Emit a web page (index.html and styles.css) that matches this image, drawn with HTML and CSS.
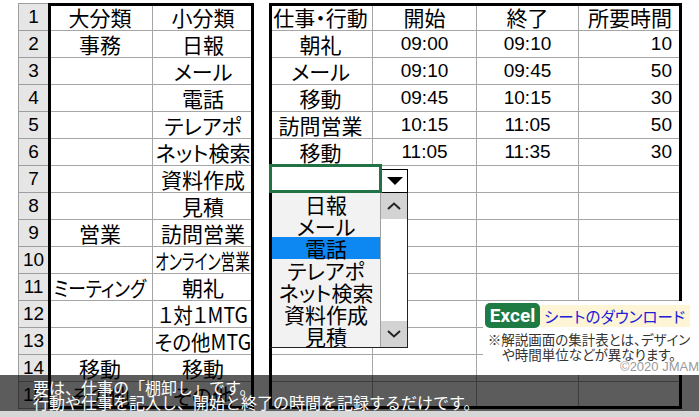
FILE: index.html
```html
<!DOCTYPE html>
<html lang="ja">
<head>
<meta charset="utf-8">
<title>仕事の棚卸し</title>
<link rel="stylesheet" href="styles.css">
</head>
<body>
<div class="sheet">
  <div class="rowhead">
    <div class="rh">1</div><div class="rh">2</div><div class="rh">3</div><div class="rh">4</div><div class="rh">5</div>
    <div class="rh">6</div><div class="rh">7</div><div class="rh">8</div><div class="rh">9</div><div class="rh">10</div>
    <div class="rh">11</div><div class="rh">12</div><div class="rh">13</div><div class="rh">14</div><div class="rh">15</div>
  </div>

  <div class="tbl tbl-left">
    <div class="c">大分類</div><div class="c">小分類</div>
    <div class="c">事務</div><div class="c">日報</div>
    <div class="c"></div><div class="c">メール</div>
    <div class="c"></div><div class="c">電話</div>
    <div class="c"></div><div class="c">テレアポ</div>
    <div class="c"></div><div class="c">ネット検索</div>
    <div class="c"></div><div class="c">資料作成</div>
    <div class="c"></div><div class="c">見積</div>
    <div class="c">営業</div><div class="c">訪問営業</div>
    <div class="c"></div><div class="c"><span class="squeeze">オンライン営業</span></div>
    <div class="c"><span class="narrow">ミーティング</span></div><div class="c">朝礼</div>
    <div class="c"></div><div class="c"><span class="tight">１対１MTG</span></div>
    <div class="c"></div><div class="c"><span class="tight">その他MTG</span></div>
    <div class="c">移動</div><div class="c">移動</div>
    <div class="c">その他</div><div class="c">その他</div>
  </div>

  <div class="tbl tbl-right">
    <div class="c">仕事・行動</div><div class="c">開始</div><div class="c">終了</div><div class="c">所要時間</div>
    <div class="c">朝礼</div><div class="c n">09:00</div><div class="c n">09:10</div><div class="c n r">10</div>
    <div class="c">メール</div><div class="c n">09:10</div><div class="c n">09:45</div><div class="c n r">50</div>
    <div class="c">移動</div><div class="c n">09:45</div><div class="c n">10:15</div><div class="c n r">30</div>
    <div class="c">訪問営業</div><div class="c n">10:15</div><div class="c n">11:05</div><div class="c n r">50</div>
    <div class="c">移動</div><div class="c n">11:05</div><div class="c n">11:35</div><div class="c n r">30</div>
    <div class="c"></div><div class="c"></div><div class="c"></div><div class="c"></div>
    <div class="c"></div><div class="c"></div><div class="c"></div><div class="c"></div>
    <div class="c"></div><div class="c"></div><div class="c"></div><div class="c"></div>
    <div class="c"></div><div class="c"></div><div class="c"></div><div class="c"></div>
    <div class="c"></div><div class="c"></div><div class="c"></div><div class="c"></div>
    <div class="c"></div><div class="c"></div><div class="c"></div><div class="c"></div>
    <div class="c"></div><div class="c"></div><div class="c"></div><div class="c"></div>
    <div class="c"></div><div class="c"></div><div class="c"></div><div class="c"></div>
    <div class="c"></div><div class="c"></div><div class="c"></div><div class="c"></div>
  </div>
</div>

<div class="active-cell"></div>
<div class="dd-btn">
  <svg width="16" height="8" viewBox="0 0 16 8"><polygon points="0,0 16,0 8,8" fill="#000"/></svg>
</div>
<div class="dd-list">
  <div class="dd-items">
    <div class="dd-item">日報</div>
    <div class="dd-item">メール</div>
    <div class="dd-item dd-sel">電話</div>
    <div class="dd-item">テレアポ</div>
    <div class="dd-item">ネット検索</div>
    <div class="dd-item">資料作成</div>
    <div class="dd-item">見積</div>
  </div>
  <div class="dd-scroll">
    <div class="sb-btn">
      <svg width="14" height="8" viewBox="0 0 14 8"><polyline points="1,7 7,1.5 13,7" fill="none" stroke="#222" stroke-width="2"/></svg>
    </div>
    <div class="sb-track"></div>
    <div class="sb-btn">
      <svg width="14" height="8" viewBox="0 0 14 8"><polyline points="1,1 7,6.5 13,1" fill="none" stroke="#222" stroke-width="2"/></svg>
    </div>
  </div>
</div>

<div class="notice">
  <div class="dl-row">
    <span class="excel">Excel</span>
    <span class="dl-link">シートのダウンロード</span>
  </div>
  <p class="note">※解説画面の集計表とは、デザイン<br>や時間単位などが異なります。</p>
  <div class="copy">©2020 JMAM</div>
</div>

<div class="caption">
  <p>要は、仕事の「棚卸し」です。</p>
  <p>行動や仕事を記入し、開始と終了の時間を記録するだけです。</p>
</div>
</body>
</html>
```

FILE: styles.css
```css
* { box-sizing: border-box; }
html, body { margin: 0; padding: 0; }
body {
  width: 699px;
  height: 417px;
  background: #d7d7d7;
  font-family: "Noto Sans CJK JP", sans-serif;
  color: #000;
  position: relative;
  overflow: hidden;
}

.sheet {
  display: flex;
  align-items: flex-start;
  height: 411px;
  background: #fff;
  padding: 3px 0 0 18px;
}

.rowhead {
  width: 30px;
  border-top: 1px solid #9e9e9e;
  border-left: 1px solid #9e9e9e;
}
.rh {
  height: 27px;
  border-bottom: 1px solid #9e9e9e;
  background: #e6e6e6;
  font: 19px/26px "Liberation Sans", sans-serif;
  text-align: center;
}

.tbl {
  display: grid;
  grid-auto-rows: 27px;
  border-top: 1px solid #a6a6a6;
  outline: 3px solid #000;
  outline-offset: -3px;
}
.tbl-left {
  width: 206px;
  grid-template-columns: 105px 101px;
}
.tbl-right {
  width: 413px;
  margin-left: 15px;
  grid-template-columns: 104px 104px 102px 103px;
}

.c {
  display: flex;
  align-items: center;
  justify-content: center;
  border-bottom: 1px solid #a6a6a6;
  border-right: 1px solid #a6a6a6;
  font-size: 21px;
  line-height: 26px;
  white-space: nowrap;
  font-feature-settings: "palt";
}
.c.n {
  font-family: "Liberation Sans", sans-serif;
  font-size: 19px;
}
.c.r {
  justify-content: flex-end;
  padding-right: 9px;
}
.squeeze {
  display: inline-block;
  transform: scaleX(0.7);
  flex: none;
}
.narrow {
  display: inline-block;
  flex: none;
  transform: scaleX(0.84);
}
.tight {
  display: inline-block;
  flex: none;
  transform: scaleX(0.93);
}

/* dropdown */
.active-cell {
  position: absolute;
  left: 269px;
  top: 164px;
  width: 113px;
  height: 29px;
  border: 3px solid #217346;
  background: #fff;
}
.dd-btn {
  position: absolute;
  left: 382px;
  top: 169px;
  width: 26px;
  height: 24px;
  background: #fff;
  border: 1px solid #000;
  border-left: none;
  display: flex;
  align-items: center;
  justify-content: center;
}
.dd-list {
  position: absolute;
  left: 269px;
  top: 193px;
  width: 139px;
  height: 155px;
  display: flex;
  background: #f2f2f2;
  border-left: 3px solid #000;
  border-right: 1px solid #222;
  border-bottom: 1px solid #222;
}
.dd-items {
  flex: 1;
}
.dd-item {
  height: 22px;
  font-size: 21px;
  line-height: 22px;
  text-align: center;
  white-space: nowrap;
  font-feature-settings: "palt";
}
.dd-sel {
  background: #0d88f2;
}
.dd-scroll {
  width: 27px;
  display: flex;
  flex-direction: column;
  border-left: 1px solid #a0a0a0;
}
.sb-btn {
  height: 26px;
  background: #d3d3d3;
  display: flex;
  align-items: center;
  justify-content: center;
}
.sb-track {
  flex: 1;
  background: #fff;
}

/* download notice */
.notice {
  position: absolute;
  left: 483px;
  top: 301px;
  width: 216px;
  height: 74px;
  background: #fff;
  padding: 2px 0 0 2px;
}
.dl-row {
  display: flex;
  align-items: center;
}
.excel {
  width: 55px;
  height: 25px;
  border-radius: 5px;
  background: #1e7b44;
  color: #fff;
  font: bold 19px/25px Roboto, sans-serif;
  text-align: center;
}
.dl-link {
  height: 22px;
  width: 150px;
  padding-left: 4px;
  background: #fdf5d6;
  color: #2020d8;
  font-size: 15.5px;
  line-height: 22px;
  white-space: nowrap;
  font-feature-settings: "palt";
}
.note {
  margin: 4px 0 0;
  width: 208px;
  font-size: 13.5px;
  line-height: 15px;
  color: #333;
  text-align: center;
  white-space: nowrap;
  font-feature-settings: "palt";
}
.copy {
  text-align: right;
  font: 13px/14px "Liberation Sans", sans-serif;
  color: #9a9a9a;
  margin-top: -2px;
}

/* caption overlay */
.caption {
  position: absolute;
  left: 0;
  top: 375px;
  width: 699px;
  height: 36px;
  background: rgba(0, 0, 0, 0.64);
  padding: 5px 0 0 33px;
  color: #fff;
}
.caption p {
  margin: 0;
  font-size: 16px;
  line-height: 15px;
  white-space: nowrap;
}
```
